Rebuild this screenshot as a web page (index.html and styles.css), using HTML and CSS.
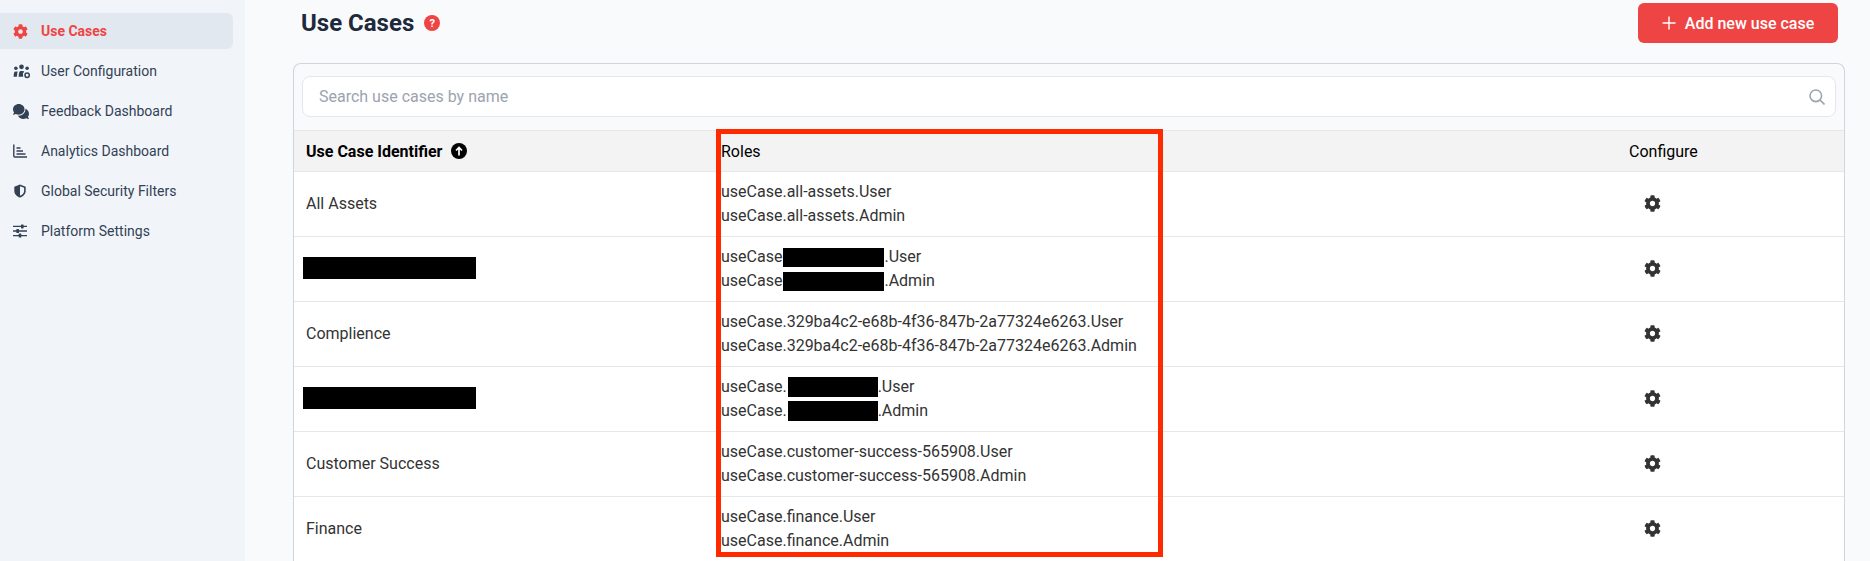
FILE: index.html
```html
<!DOCTYPE html>
<html lang="en">
<head>
<meta charset="utf-8">
<title>Use Cases</title>
<link rel="stylesheet" href="styles.css">
</head>
<body>
<div class="app">
  <aside class="sidebar">
    <nav class="nav">
      <a class="nav-item active"><svg class="nav-icon icon-15" viewBox="0 0 512 512"><use href="#gear"/></svg><span>Use Cases</span></a>
      <a class="nav-item"><svg class="nav-icon icon-17" viewBox="0 0 18 16"><circle cx="9" cy="3" r="2.5"/><circle cx="3" cy="4.5" r="1.9"/><circle cx="15" cy="4.5" r="1.9"/><path d="M0.500 13.500 1 9.500Q1.300 8 3 8H4.800L4 13.500ZM5.800 13.500 6.500 9Q6.800 7.500 8.500 7.500H10.500Q11.500 7.500 12 8.500L10.500 9.500 10.800 13.500Z"/><circle class="cog-ring" cx="15" cy="12" r="2.300"/></svg><span>User Configuration</span></a>
      <a class="nav-item"><svg class="nav-icon icon-16" viewBox="0 32 576 448" preserveAspectRatio="none"><path d="M416 192c0-88.400-93.100-160-208-160S0 103.600 0 192c0 34.300 14.100 65.900 38 92-13.400 30.200-35.500 54.200-35.800 54.500-2.200 2.300-2.800 5.700-1.500 8.700S4.800 352 8 352c36.600 0 66.900-12.300 88.700-25 32.200 15.700 70.300 25 111.300 25 114.900 0 208-71.600 208-160zm122 220c23.900-26 38-57.700 38-92 0-66.900-53.500-124.200-129.300-148.100.9 6.600 1.300 13.300 1.300 20.100 0 105.900-107.700 192-240 192-10.800 0-21.300-.8-31.700-1.900C207.800 439.600 281.800 480 368 480c41 0 79.100-9.200 111.300-25 21.800 12.700 52.100 25 88.700 25 3.200 0 6.100-1.900 7.300-4.800 1.300-2.900.7-6.300-1.500-8.700-.3-.3-22.400-24.200-35.800-54.500z"/></svg><span>Feedback Dashboard</span></a>
      <a class="nav-item"><svg class="nav-icon icon-14 line-icon" viewBox="0 0 14 14"><path d="M0.800 0.500V12Q0.800 13 1.800 13H14M3.500 4H7.500M3.500 7H10M3.500 10H12.500"/></svg><span>Analytics Dashboard</span></a>
      <a class="nav-item"><svg class="nav-icon icon-14" viewBox="0 0 16 16"><path d="M8 0.500 14.500 3V8C14.500 11.500 11.500 14.500 8 15.500 4.500 14.500 1.500 11.500 1.500 8V3ZM8 2.500V13.500C10.500 12.500 12.700 10.500 12.700 8V4.200Z" fill-rule="evenodd"/></svg><span>Global Security Filters</span></a>
      <a class="nav-item"><svg class="nav-icon icon-14" viewBox="0 0 14 14"><path d="M0 1.700H14V3.100H0ZM0 6.300H14V7.700H0ZM0 10.900H14V12.300H0Z"/><rect x="8" y="0.400" width="2.600" height="4" rx=".6"/><rect x="3.400" y="5" width="2.600" height="4" rx=".6"/><rect x="5.700" y="9.600" width="2.600" height="4" rx=".6"/></svg><span>Platform Settings</span></a>
    </nav>
  </aside>
  <main class="main">
    <header class="page-head">
      <div class="title-wrap">
        <h1 class="title">Use Cases</h1>
        <span class="help">?</span>
      </div>
      <button class="add-btn"><svg class="plus" viewBox="0 0 14 14"><path d="M7 0.500V13.500M0.500 7H13.500"/></svg><span>Add new use case</span></button>
    </header>
    <section class="card">
      <div class="search-wrap">
        <div class="search">
          <input class="search-input" type="text" placeholder="Search use cases by name">
          <svg class="search-icon" viewBox="0 0 16 16"><circle cx="6.800" cy="6.800" r="5.800"/><path d="M11 11 15.500 15.500"/></svg>
        </div>
      </div>
      <table class="table">
        <colgroup><col class="col-name"><col class="col-roles"><col></colgroup>
        <thead>
          <tr>
            <th class="th-name"><span class="th-inner">Use Case Identifier<svg class="sort" viewBox="0 0 16 16"><circle cx="8" cy="8" r="8"/><path class="sort-arrow" d="M8 12.500V4.500M5 7.500 8 4.500 11 7.500"/></svg></span></th>
            <th>Roles</th>
            <th>Configure</th>
          </tr>
        </thead>
        <tbody>
          <tr>
            <td>All Assets</td>
            <td><div>useCase.all-assets.User</div><div>useCase.all-assets.Admin</div></td>
            <td><svg class="gear" viewBox="0 0 512 512"><use href="#gear"/></svg></td>
          </tr>
          <tr>
            <td><span class="mask mask-name"></span></td>
            <td><div>useCase<span class="mask mask-a"></span>.User</div><div>useCase<span class="mask mask-a"></span>.Admin</div></td>
            <td><svg class="gear" viewBox="0 0 512 512"><use href="#gear"/></svg></td>
          </tr>
          <tr>
            <td>Complience</td>
            <td><div>useCase.329ba4c2-e68b-4f36-847b-2a77324e6263.User</div><div>useCase.329ba4c2-e68b-4f36-847b-2a77324e6263.Admin</div></td>
            <td><svg class="gear" viewBox="0 0 512 512"><use href="#gear"/></svg></td>
          </tr>
          <tr>
            <td><span class="mask mask-name"></span></td>
            <td><div>useCase.<span class="mask mask-b"></span>.User</div><div>useCase.<span class="mask mask-b"></span>.Admin</div></td>
            <td><svg class="gear" viewBox="0 0 512 512"><use href="#gear"/></svg></td>
          </tr>
          <tr>
            <td>Customer Success</td>
            <td><div>useCase.customer-success-565908.User</div><div>useCase.customer-success-565908.Admin</div></td>
            <td><svg class="gear" viewBox="0 0 512 512"><use href="#gear"/></svg></td>
          </tr>
          <tr>
            <td>Finance</td>
            <td><div>useCase.finance.User</div><div>useCase.finance.Admin</div></td>
            <td><svg class="gear" viewBox="0 0 512 512"><use href="#gear"/></svg></td>
          </tr>
        </tbody>
      </table>
      <div class="highlight"></div>
    </section>
  </main>
</div>
<svg class="defs" width="0" height="0"><defs><path id="gear" d="M487.400 315.700l-42.600-24.600c4.300-23.200 4.300-47 0-70.200l42.600-24.600c4.900-2.800 7.100-8.600 5.500-14-11.100-35.600-30-67.800-54.700-94.600-3.800-4.100-10-5.100-14.800-2.300L380.800 110c-17.900-15.400-38.500-27.300-60.800-35.100V25.800c0-5.600-3.900-10.500-9.400-11.700-36.700-8.200-74.300-7.800-109.200 0-5.500 1.200-9.400 6.100-9.400 11.700V75c-22.200 7.900-42.800 19.800-60.800 35.100L88.700 85.500c-4.900-2.800-11-1.900-14.800 2.300-24.700 26.700-43.600 58.900-54.700 94.600-1.700 5.400.6 11.200 5.500 14L67.300 221c-4.300 23.200-4.300 47 0 70.200l-42.600 24.600c-4.900 2.800-7.100 8.600-5.500 14 11.100 35.600 30 67.800 54.700 94.600 3.800 4.100 10 5.100 14.800 2.300l42.600-24.600c17.900 15.400 38.500 27.300 60.800 35.100v49.200c0 5.600 3.900 10.500 9.400 11.700 36.700 8.200 74.300 7.800 109.200 0 5.500-1.200 9.400-6.100 9.400-11.700v-49.200c22.200-7.900 42.800-19.800 60.800-35.100l42.600 24.600c4.900 2.800 11 1.900 14.800-2.300 24.700-26.700 43.600-58.900 54.700-94.600 1.500-5.500-.7-11.300-5.600-14.100zM256 336c-44.100 0-80-35.900-80-80s35.900-80 80-80 80 35.900 80 80-35.900 80-80 80z"/></defs></svg>
</body>
</html>
```
FILE: styles.css
```css
* { box-sizing: border-box; }
html, body { margin: 0; height: 100%; overflow: hidden; }
body { font-family: Roboto, "Liberation Sans", sans-serif; font-size: 16px; color: #333; background: #f8fafc; }
.defs { position: absolute; }
.app { display: flex; height: 561px; overflow: hidden; }

.sidebar { width: 245px; flex: none; background: #f1f5f9; padding-top: 13px; }
.nav { display: flex; flex-direction: column; gap: 4px; width: 233px; }
.nav-item { display: grid; grid-template-columns: 28px 1fr; align-items: center; height: 36px; padding-left: 13px; font-size: 14px; color: #334155; border-radius: 0 6px 6px 0; }
.nav-item.active { background: #e2e8f0; color: #ef4444; font-weight: 700; }
.nav-icon { fill: currentColor; overflow: visible; }
.icon-14 { width: 14px; height: 14px; }
.icon-15 { width: 15px; height: 15px; }
.icon-16 { width: 16px; height: 15px; }
.icon-17 { width: 17px; height: 15px; }
.line-icon { fill: none; stroke: currentColor; stroke-width: 1.4; }
.cog-ring { fill: none; stroke: currentColor; stroke-width: 1.6; }

.main { flex: 1; min-width: 0; padding: 3px 25px 0 48px; }
.page-head { display: flex; justify-content: space-between; align-items: flex-start; height: 60px; padding: 0 7px 0 8px; }
.title-wrap { display: flex; align-items: center; gap: 10px; height: 40px; }
.title { margin: 0; font-size: 24px; font-weight: 700; color: #1e293b; line-height: 40px; }
.help { width: 16px; height: 16px; border-radius: 50%; background: #ef4444; color: #fff; font-size: 11px; font-weight: 700; display: flex; align-items: center; justify-content: center; }
.add-btn { display: flex; align-items: center; justify-content: center; gap: 9px; width: 200px; height: 40px; border: 0; border-radius: 6px; background: #ef4444; color: #fff; font: 500 16px Roboto, sans-serif; }
.plus { width: 14px; height: 14px; fill: none; stroke: currentColor; stroke-width: 1.4; }

.card { position: relative; border: 1px solid #d1d5db; border-bottom: 0; border-radius: 8px 8px 0 0; height: 520px; }
.search-wrap { height: 66px; padding: 12px 8px 0; }
.search { position: relative; height: 41px; }
.search-input { width: 100%; height: 41px; padding: 0 40px 0 16px; border: 1px solid #e5e7eb; border-radius: 8px; background: #fff; font: 400 16px Roboto, sans-serif; color: #333; }
.search-input::placeholder { color: #9ca3af; opacity: 1; }
.search-icon { position: absolute; top: 13px; right: 11px; width: 16px; height: 16px; fill: none; stroke: #9ca3af; stroke-width: 1.6; }

.table { width: 100%; border-collapse: collapse; table-layout: fixed; background: #fff; }
.col-name { width: 415px; }
.col-roles { width: 908px; }
th { height: 41px; padding: 0 12px; background: #f3f3f3; border-top: 1px solid #e5e7eb; border-bottom: 1px solid #e5e7eb; font-size: 16px; font-weight: 400; color: #000; text-align: left; }
.th-name { font-weight: 700; }
.th-inner { display: flex; align-items: center; gap: 9px; }
.sort { width: 16px; height: 16px; flex: none; }
.sort-arrow { fill: none; stroke: #fff; stroke-width: 1.7; }
td { height: 65px; padding: 0 12px; border-bottom: 1px solid #e5e7eb; font-size: 16px; line-height: 24px; color: #333; }
.gear { display: block; width: 17px; height: 17px; margin: 0 0 2px 15px; fill: #333; }

.mask { display: inline-block; background: #000; vertical-align: middle; }
.mask-name { width: 173px; height: 22px; margin: 0 0 3px -3px; }
.mask-a { width: 101px; height: 19px; margin: 0 0 1px 1px; }
.mask-b { width: 90px; height: 20px; margin: 0 0 1px 1px; }

.highlight { position: absolute; left: 422px; top: 65px; width: 447px; height: 428px; border: 5px solid #ff2a00; pointer-events: none; }
```
